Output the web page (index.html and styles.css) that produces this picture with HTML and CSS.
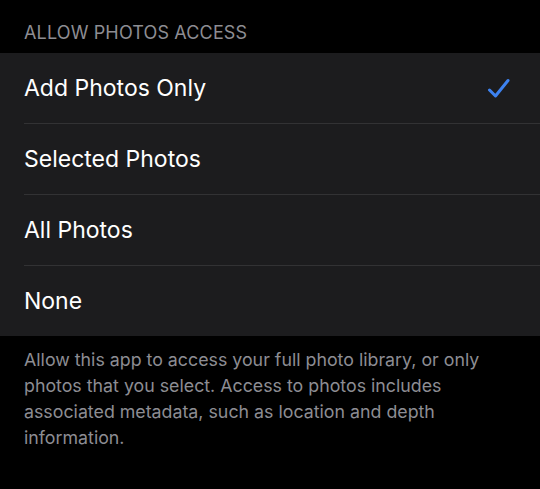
FILE: index.html
```html
<!DOCTYPE html>
<html>
<head>
<meta charset="utf-8">
<link rel="stylesheet" href="styles.css">
</head>
<body>
<div class="page">
  <div class="section-header">ALLOW PHOTOS ACCESS</div>
  <ul class="group">
    <li class="row"><span class="label">Add Photos Only</span>
      <svg class="check" width="24" height="24" viewBox="0 0 24 24"><path d="M2.5 14 L8.5 20 L21 4.5" fill="none" stroke="#3d82f0" stroke-width="3" stroke-linecap="round" stroke-linejoin="round"/></svg>
    </li>
    <li class="row"><span class="label">Selected Photos</span></li>
    <li class="row"><span class="label">All Photos</span></li>
    <li class="row last"><span class="label">None</span></li>
  </ul>
  <p class="footer">Allow this app to access your full photo library, or only photos that you select. Access to photos includes associated metadata, such as location and depth information.</p>
</div>
</body>
</html>
```
FILE: styles.css
```css
html, body {
  margin: 0;
  padding: 0;
  background: #000;
}
.page {
  width: 540px;
  height: 489px;
  background: #000;
  font-family: Inter, "Liberation Sans", sans-serif;
  overflow: hidden;
}
.section-header {
  color: #8d8d93;
  font-size: 18px;
  line-height: 22px;
  padding: 22px 24px 9px;
  letter-spacing: 0.15px;
}
.group {
  list-style: none;
  margin: 0;
  padding: 0;
  background: #1c1c1e;
}
.row {
  display: flex;
  align-items: center;
  justify-content: space-between;
  height: 70px;
  margin-left: 24px;
  padding-right: 29px;
  border-bottom: 1px solid #323234;
  box-sizing: content-box;
}
.row.last {
  border-bottom: none;
}
.label {
  color: #fff;
  font-size: 23px;
}
.check {
  display: block;
}
.footer {
  margin: 0;
  padding: 11px 24px 0;
  color: #8d8d93;
  font-size: 17.8px;
  line-height: 26px;
}
```
